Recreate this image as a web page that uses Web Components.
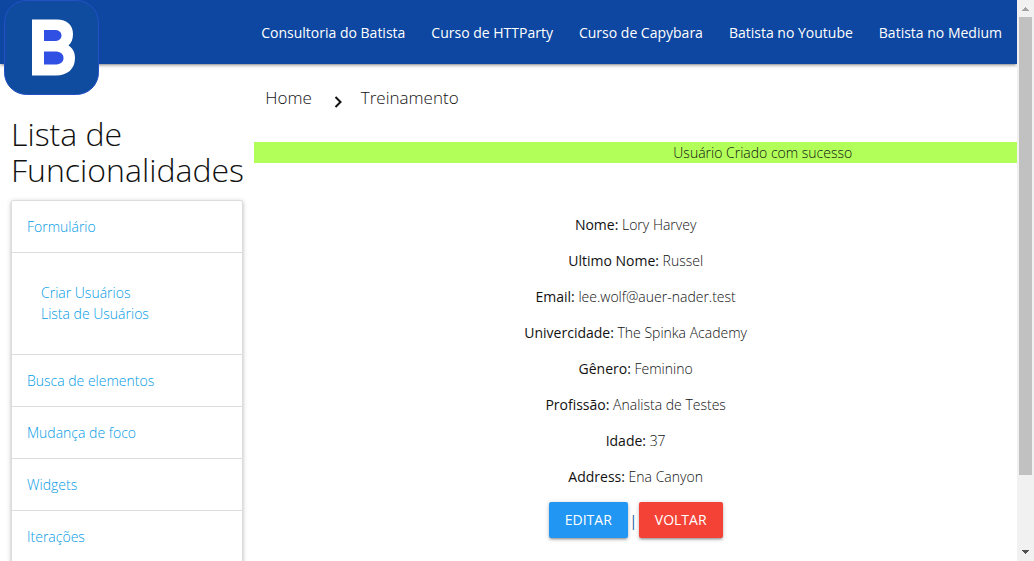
<!DOCTYPE html>
<html lang="pt-BR">
<head>
<meta charset="utf-8">
<meta name="viewport" content="width=device-width, initial-scale=1">
<title>Treinamento</title>
<style>
  body {
    margin: 0;
    background: #fff;
    color: #111;
    font: 300 14px/21px "Open Sans", "Noto Sans", sans-serif;
  }
</style>
</head>
<body>
<app-shell>
  <nav-bar slot="header">
    <nav-link href="#consultoria">Consultoria do Batista</nav-link>
    <nav-link href="#httparty">Curso de HTTParty</nav-link>
    <nav-link href="#capybara">Curso de Capybara</nav-link>
    <nav-link href="#youtube">Batista no Youtube</nav-link>
    <nav-link href="#medium">Batista no Medium</nav-link>
  </nav-bar>
  <feature-list slot="side" heading="Lista de Funcionalidades">
    <feature-item href="#formulario">Formulário
      <feature-link slot="children" href="#criar">Criar Usuários</feature-link>
      <feature-link slot="children" href="#lista">Lista de Usuários</feature-link>
    </feature-item>
    <feature-item href="#busca">Busca de elementos</feature-item>
    <feature-item href="#foco">Mudança de foco</feature-item>
    <feature-item href="#widgets">Widgets</feature-item>
    <feature-item href="#iteracoes">Iterações</feature-item>
  </feature-list>
  <bread-crumb></bread-crumb>
  <flash-notice>Usuário Criado com sucesso</flash-notice>
  <user-details>
    <user-field label="Nome">Lory Harvey</user-field>
    <user-field label="Ultimo Nome">Russel</user-field>
    <user-field label="Email">lee.wolf@auer-nader.test</user-field>
    <user-field label="Univercidade">The Spinka Academy</user-field>
    <user-field label="Gênero">Feminino</user-field>
    <user-field label="Profissão">Analista de Testes</user-field>
    <user-field label="Idade">37</user-field>
    <user-field label="Address">Ena Canyon</user-field>
    <action-button slot="edit" style="--fill: #2196f3">EDITAR</action-button>
    <action-button slot="back" style="--fill: #f44336">VOLTAR</action-button>
  </user-details>
</app-shell>

<script>
const define = (name, render) => customElements.define(name, class extends HTMLElement {
  constructor() {
    super();
    this.attachShadow({ mode: "open" }).innerHTML = render(this);
  }
});
const attr = (el, name) => el.getAttribute(name) || "";

define("app-shell", () => `
  <style>
    :host { display: flex; height: 100vh; overflow: hidden; }
    .page { flex: 1; min-width: 0; overflow: hidden; }
    .columns { display: grid; grid-template-columns: 1fr 3fr; }
    .columns > * { min-width: 0; }
  </style>
  <div class="page">
    <slot name="header"></slot>
    <div class="columns">
      <aside><slot name="side"></slot></aside>
      <main><slot></slot></main>
    </div>
  </div>
  <scroll-track></scroll-track>`);

define("scroll-track", () => `
  <style>
    :host { display: flex; flex-direction: column; width: 17px; background: #f1f1f1; }
    svg { display: block; width: 17px; height: 17px; flex: none; }
    .run { flex: 1; padding: 0 2px; }
    .thumb { height: 87%; background: #c1c1c1; }
  </style>
  <svg viewBox="0 0 17 17" shape-rendering="crispEdges"><path fill="#a3a3a3" d="M8 7h1v1h1v1h1v1h1v1H5v-1h1V9h1V8h1z"/></svg>
  <div class="run"><div class="thumb"></div></div>
  <svg viewBox="0 0 17 17" shape-rendering="crispEdges"><path fill="#505050" d="M5 6h7v1h-1v1h-1v1H9v1H8V9H7V8H6V7H5z"/></svg>`);

define("nav-bar", () => `
  <style>
    :host { display: block; position: relative; z-index: 1; background: #0d47a1;
      box-shadow: 0 2px 2px 0 rgba(0,0,0,.14), 0 3px 1px -2px rgba(0,0,0,.12), 0 1px 5px 0 rgba(0,0,0,.2); }
    nav { display: flex; justify-content: flex-end; height: 64px; padding-right: 2px; }
    .logo { position: absolute; left: 4px; top: 0; }
    svg { display: block; width: 95px; height: 95px; }
  </style>
  <nav>
    <a class="logo" href="#inicio" aria-label="Início">
      <svg viewBox="0 0 95 95">
        <rect x=".5" y=".5" width="94" height="94" rx="22" fill="#0f4c9f" stroke="#2450c8"/>
        <path fill="#fff" d="M28 19.500H53C63 19.500 69 25 69 34C69 39 67.500 43 64.500 45.500C68.500 48 71 52 71 58C71 69 63.500 75.500 52 75.500H28Z"/>
        <path fill="#3050e4" d="M40 30H50C55 30 57.500 32 57.500 35.500C57.500 39 55 41 50 41H40ZM40 51.500H51C56.500 51.500 59.500 54 59.500 58C59.500 62 56.500 64.500 51 64.500H40Z"/>
      </svg>
    </a>
    <slot></slot>
  </nav>`);

define("nav-link", el => `
  <style>
    :host { display: block; }
    a { display: block; padding: 0 13px; color: #fff; font-weight: 400; line-height: 65px; text-decoration: none; white-space: nowrap; }
  </style>
  <a href="${attr(el, "href")}"><slot></slot></a>`);

define("feature-list", el => `
  <style>
    :host { display: block; padding: 0 11px; }
    h1 { margin: 52px 0 12px; font-size: 32px; line-height: 36px; font-weight: inherit; }
    .card { border: 1px solid #ddd; border-bottom: 0; border-radius: 2px;
      box-shadow: 0 2px 2px 0 rgba(0,0,0,.14), 0 3px 1px -2px rgba(0,0,0,.12), 0 1px 5px 0 rgba(0,0,0,.2); }
  </style>
  <h1>${attr(el, "heading")}</h1>
  <div class="card"><slot></slot></div>`);

define("feature-item", el => `
  <style>
    :host { display: block; }
    a { display: block; padding: 15px; border-bottom: 1px solid #ddd; color: #039be5; text-decoration: none; }
    .children { padding: 29px 29px 30px; border-bottom: 1px solid #ddd; }
  </style>
  <a href="${attr(el, "href")}"><slot></slot></a>
  ${el.querySelector("[slot=children]") ? `<div class="children"><slot name="children"></slot></div>` : ""}`);

define("feature-link", el => `
  <style>
    :host { display: block; }
    a { color: #039be5; text-decoration: none; }
  </style>
  <a href="${attr(el, "href")}"><slot></slot></a>`);

define("bread-crumb", () => `
  <style>
    :host { display: block; padding: 22px 11px 24px; }
    nav { display: flex; align-items: flex-start; font-size: 17px; line-height: 24px; }
    a { color: inherit; text-decoration: none; }
    svg { width: 24px; height: 24px; margin: 8px 11px 0 14px; }
  </style>
  <nav aria-label="Trilha">
    <a href="#home">Home</a>
    <svg viewBox="0 0 24 24"><path fill="none" stroke="#111" stroke-width="2" d="M9.500 3L14.500 8L9.500 13"/></svg>
    <a href="#treinamento">Treinamento</a>
  </nav>`);

define("flash-notice", () => `
  <style>
    :host { display: block; width: calc(100% * 4 / 3); background: #b2ff59; text-align: center; }
  </style>
  <div role="status"><slot></slot></div>`);

define("user-details", () => `
  <style>
    :host { display: flex; flex-direction: column; align-items: center; gap: 15px; padding: 51px 11px 22px; }
    .actions { display: flex; align-items: center; }
    .bar { width: 11px; text-align: center; font-weight: 400; color: #01579b; }
  </style>
  <slot></slot>
  <div class="actions"><slot name="edit"></slot><span class="bar">|</span><slot name="back"></slot></div>`);

define("user-field", el => `
  <style>
    :host { display: block; }
    strong { font-weight: 500; }
  </style>
  <strong>${attr(el, "label")}:</strong> <slot></slot>`);

define("action-button", () => `
  <style>
    :host { display: block; }
    button { display: block; height: 36px; padding: 0 16px; border: 0; border-radius: 2px; background: var(--fill); color: #fff;
      font: 400 14px/36px "Open Sans", "Noto Sans", sans-serif;
      box-shadow: 0 2px 2px 0 rgba(0,0,0,.14), 0 3px 1px -2px rgba(0,0,0,.12), 0 1px 5px 0 rgba(0,0,0,.2); }
  </style>
  <button type="button"><slot></slot></button>`);
</script>
</body>
</html>
